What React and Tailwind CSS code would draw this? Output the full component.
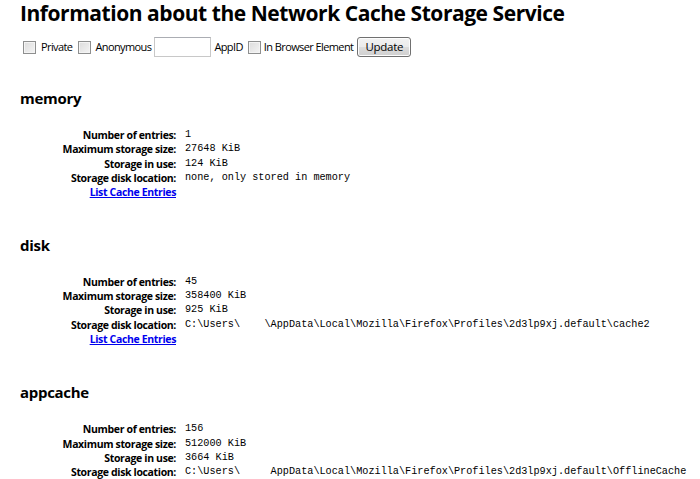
import { useState } from "react";

const sections = [
  {
    name: "memory",
    gap: "mt-[31px]",
    rows: [
      ["Number of entries:", "1"],
      ["Maximum storage size:", "27648 KiB"],
      ["Storage in use:", "124 KiB"],
      ["Storage disk location:", "none, only stored in memory"],
    ],
    link: true,
  },
  {
    name: "disk",
    gap: "mt-[35px]",
    rows: [
      ["Number of entries:", "45"],
      ["Maximum storage size:", "358400 KiB"],
      ["Storage in use:", "925 KiB"],
      [
        "Storage disk location:",
        "C:\\Users\\    \\AppData\\Local\\Mozilla\\Firefox\\Profiles\\2d3lp9xj.default\\cache2",
      ],
    ],
    link: true,
  },
  {
    name: "appcache",
    gap: "mt-[36px]",
    rows: [
      ["Number of entries:", "156"],
      ["Maximum storage size:", "512000 KiB"],
      ["Storage in use:", "3664 KiB"],
      [
        "Storage disk location:",
        "C:\\Users\\     AppData\\Local\\Mozilla\\Firefox\\Profiles\\2d3lp9xj.default\\OfflineCache",
      ],
    ],
    link: false,
  },
];

function Checkbox({ checked, onChange }) {
  return (
    <span
      onClick={onChange}
      className="inline-block w-[13px] h-[13px] border border-[#8e8f8f] bg-[linear-gradient(135deg,#dcdcdc_0%,#f4f4f4_100%)] shadow-[inset_0_0_0_1px_#f4f4f4] cursor-default"
    >
      {checked && (
        <svg viewBox="0 0 11 11" className="w-full h-full">
          <path d="M2 5.5l2.2 2.3L9 3" fill="none" stroke="#333" strokeWidth="1.6" />
        </svg>
      )}
    </span>
  );
}

export default function App() {
  const [flags, setFlags] = useState({ priv: false, anon: false, browser: false });
  const [appId, setAppId] = useState("");

  const toggle = (k) => setFlags((f) => ({ ...f, [k]: !f[k] }));

  return (
    <div className="bg-white min-h-[479px] pl-[20px] text-black font-['Open_Sans',sans-serif]">
      <h1 className="text-[21px] font-bold leading-[26px] tracking-[-0.45px]">
        Information about the Network Cache Storage Service
      </h1>

      {/* Filters */}
      <div className="flex items-center mt-[11px] h-[20px] text-[11px] tracking-[-0.6px]">
        <span className="ml-[3px] flex">
          <Checkbox checked={flags.priv} onChange={() => toggle("priv")} />
        </span>
        <span className="ml-[5px]">Private</span>
        <span className="ml-[6px] flex">
          <Checkbox checked={flags.anon} onChange={() => toggle("anon")} />
        </span>
        <span className="ml-[4px]">Anonymous</span>
        <input
          value={appId}
          onChange={(e) => setAppId(e.target.value)}
          className="ml-[3px] w-[57px] h-[20px] border border-[#c8c8c8] border-t-[#abadb3] bg-white outline-none px-1 text-[11px]"
        />
        <span className="ml-[3px]">AppID</span>
        <span className="ml-[5px] flex">
          <Checkbox checked={flags.browser} onChange={() => toggle("browser")} />
        </span>
        <span className="ml-[3px]">In Browser Element</span>
        <button className="ml-[4px] w-[54px] h-[20px] rounded-[3px] border border-[#707070] bg-[linear-gradient(#f2f2f2_0%,#ebebeb_50%,#dddddd_51%,#cfcfcf_100%)] text-[11.5px] leading-[18px] tracking-[-0.3px] shadow-[inset_0_0_0_1px_#fcfcfc]">
          Update
        </button>
      </div>

      {sections.map((s) => (
        <div key={s.name} className={s.gap}>
          <h2 className="text-[15px] font-bold leading-[20px] tracking-[-0.3px]">{s.name}</h2>
          <div className="mt-[20px] grid grid-cols-[156px_1fr] leading-[14.35px]">
            {s.rows.map(([label, value]) => (
              <div key={label} className="contents">
                <div className="text-right text-[10.5px] font-bold tracking-[-0.35px]">{label}</div>
                <div className="pl-[9px] font-['Liberation_Mono',monospace] text-[10.2px] whitespace-pre">
                  {value}
                </div>
              </div>
            ))}
            {s.link && (
              <div className="text-right text-[10.5px] font-bold tracking-[-0.35px]">
                <a href="#" className="text-[#0000ee] underline">
                  List Cache Entries
                </a>
              </div>
            )}
          </div>
        </div>
      ))}
    </div>
  );
}
